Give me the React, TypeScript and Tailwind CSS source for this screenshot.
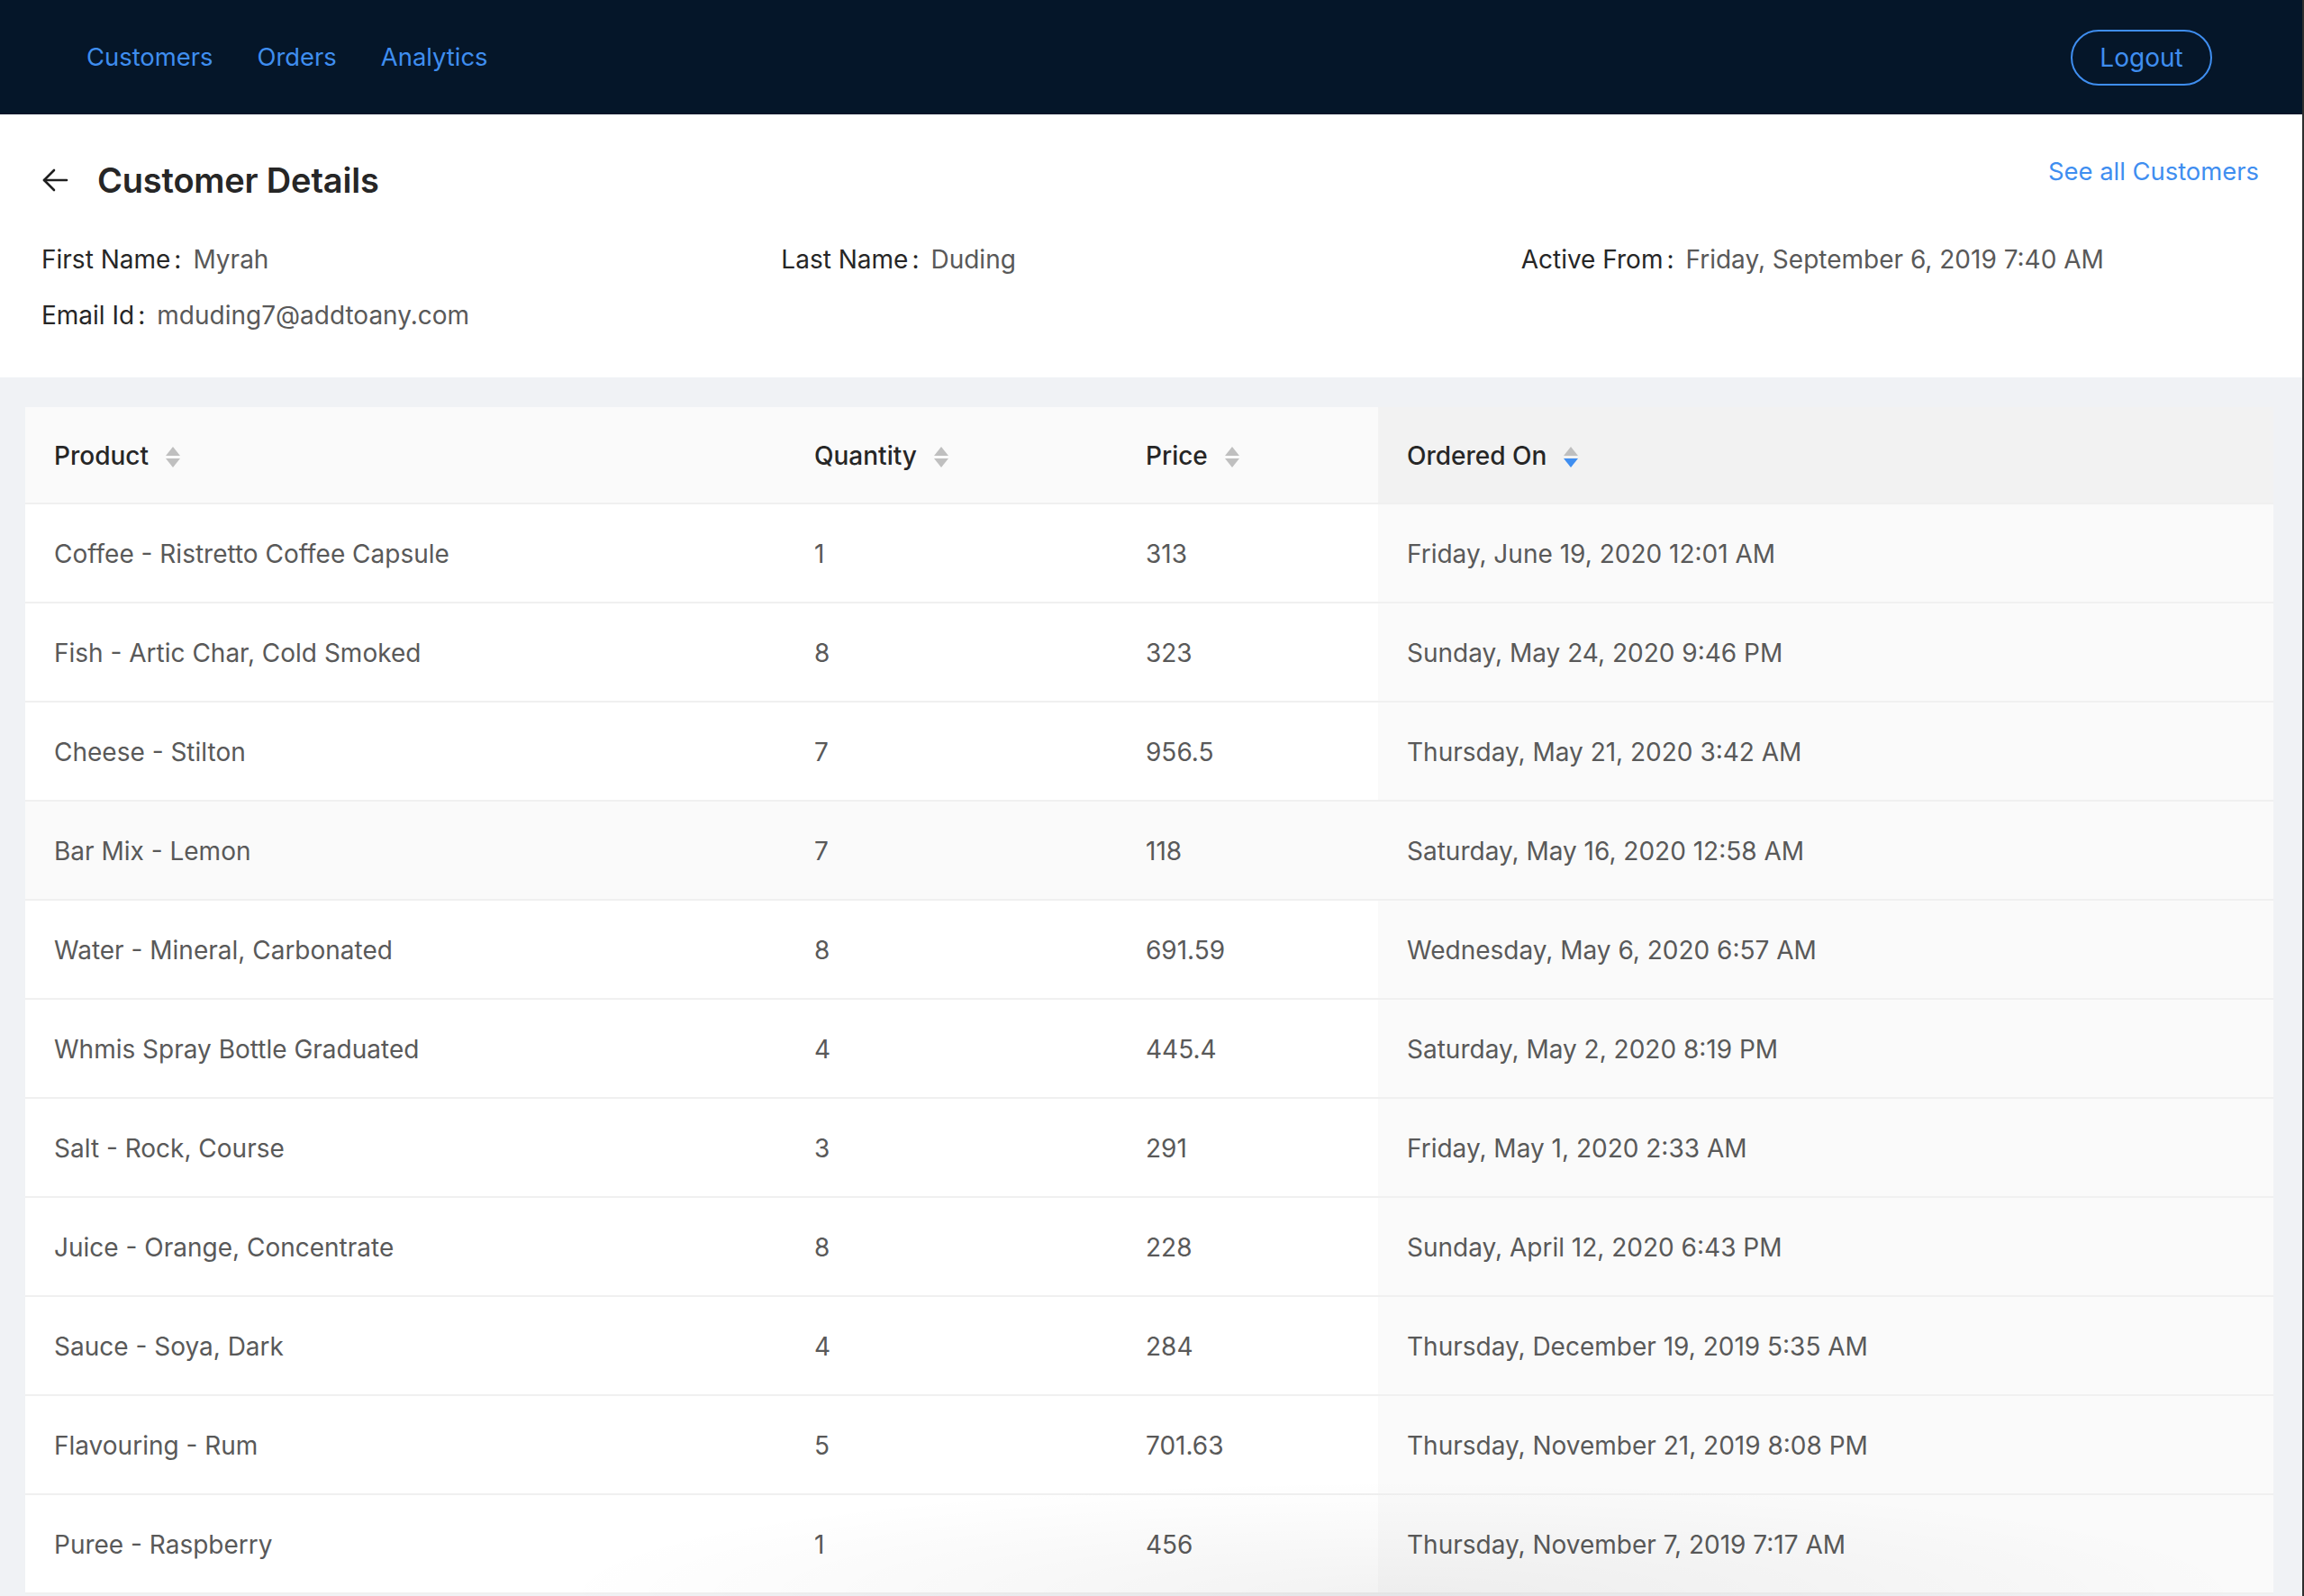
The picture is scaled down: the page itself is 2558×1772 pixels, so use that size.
import React from "react";

const rows = [
  ["Coffee - Ristretto Coffee Capsule", "1", "313", "Friday, June 19, 2020 12:01 AM"],
  ["Fish - Artic Char, Cold Smoked", "8", "323", "Sunday, May 24, 2020 9:46 PM"],
  ["Cheese - Stilton", "7", "956.5", "Thursday, May 21, 2020 3:42 AM"],
  ["Bar Mix - Lemon", "7", "118", "Saturday, May 16, 2020 12:58 AM"],
  ["Water - Mineral, Carbonated", "8", "691.59", "Wednesday, May 6, 2020 6:57 AM"],
  ["Whmis Spray Bottle Graduated", "4", "445.4", "Saturday, May 2, 2020 8:19 PM"],
  ["Salt - Rock, Course", "3", "291", "Friday, May 1, 2020 2:33 AM"],
  ["Juice - Orange, Concentrate", "8", "228", "Sunday, April 12, 2020 6:43 PM"],
  ["Sauce - Soya, Dark", "4", "284", "Thursday, December 19, 2019 5:35 AM"],
  ["Flavouring - Rum", "5", "701.63", "Thursday, November 21, 2019 8:08 PM"],
  ["Puree - Raspberry", "1", "456", "Thursday, November 7, 2019 7:17 AM"],
];

function SortIcon({ active }: { active?: boolean }) {
  return (
    <svg width="16" height="26" viewBox="0 0 16 26" className="ml-[19px] mt-[3px] shrink-0">
      <polygon points="8,1 16,11 0,11" fill="#bfbfbf" />
      <polygon points="0,14 16,14 8,24" fill={active ? "#3f8ef0" : "#bfbfbf"} />
    </svg>
  );
}

function Info({ label, value }: { label: string; value: string }) {
  return (
    <div className="flex items-center leading-[38px] text-[28px]">
      <span className="text-[#262626]">{label}</span>
      <span className="text-[#262626] ml-[4px] mr-[13px]">:</span>
      <span className="text-[#595959]">{value}</span>
    </div>
  );
}

export default function App() {
  return (
    <div
      className="w-full h-screen overflow-hidden flex bg-[#f0f2f5]"
      style={{ fontFamily: "Inter, 'Noto Sans', sans-serif" }}
    >
      <div className="flex-1 flex flex-col relative border-r-2 border-[#2e2e2e]">
        <header className="h-[127px] bg-[#051629] flex items-center justify-between pl-[96px] pr-[100px] shrink-0">
          <nav className="flex items-center gap-[49px] text-[27.4px] text-[#3f8ef0]">
            <span>Customers</span>
            <span>Orders</span>
            <span>Analytics</span>
          </nav>
          <button className="h-[62px] w-[157px] rounded-full border-2 border-[#3f8ef0] text-[#3f8ef0] text-[28px] flex items-center justify-center">
            Logout
          </button>
        </header>

        <section className="bg-white px-[46px] pt-[51px] pb-[50px] shrink-0">
          <div className="flex items-center justify-between h-[44px]">
            <div className="flex items-center gap-[32px]">
              <svg width="30" height="30" viewBox="0 0 30 30" fill="none" stroke="#1f1f1f" strokeWidth="2.6" strokeLinecap="round" strokeLinejoin="round">
                <line x1="3" y1="15" x2="28" y2="15" />
                <polyline points="14,4 3,15 14,26" />
              </svg>
              <h1 className="text-[38px] font-semibold text-[#262626] leading-[44px] tracking-[-0.2px]">Customer Details</h1>
            </div>
            <span className="text-[27.4px] text-[#3f8ef0] mb-[18px] mr-[2px]">See all Customers</span>
          </div>
          <div className="grid grid-cols-3 gap-y-[24px] mt-[47px]">
            <Info label="First Name" value="Myrah" />
            <Info label="Last Name" value="Duding" />
            <Info label="Active From" value="Friday, September 6, 2019 7:40 AM" />
            <Info label="Email Id" value="mduding7@addtoany.com" />
          </div>
        </section>

        <div className="flex-1 pl-[28px] pr-[32px] pt-[33px]">
          <div className="bg-white text-[28px]">
            <div className="grid grid-cols-[844px_368px_290px_1fr] h-[108px] border-b-2 border-[#f0f0f0] text-[#262626] font-medium">
              <div className="bg-[#fafafa] flex items-center pl-[32px] pt-[2px]">Product<SortIcon /></div>
              <div className="bg-[#fafafa] flex items-center pl-[32px] pt-[2px]">Quantity<SortIcon /></div>
              <div className="bg-[#fafafa] flex items-center pl-[32px] pt-[2px]">Price<SortIcon /></div>
              <div className="bg-[#f2f2f2] flex items-center pl-[32px] pt-[2px]">Ordered On<SortIcon active /></div>
            </div>
            {rows.map((r, i) => {
              const hover = i === 3;
              const base = hover ? "bg-[#fafafa]" : "bg-white";
              return (
                <div key={i} className="grid grid-cols-[844px_368px_290px_1fr] h-[110px] border-b-2 border-[#f0f0f0] text-[#595959]">
                  <div className={`${base} flex items-center pl-[32px] pt-[2px]`}>{r[0]}</div>
                  <div className={`${base} flex items-center pl-[32px] pt-[2px]`}>{r[1]}</div>
                  <div className={`${base} flex items-center pl-[32px] pt-[2px]`}>{r[2]}</div>
                  <div className="bg-[#fafafa] flex items-center pl-[32px] pt-[2px]">{r[3]}</div>
                </div>
              );
            })}
          </div>
        </div>
        <div className="absolute bottom-0 left-[600px] right-[40px] h-[130px] pointer-events-none bg-[radial-gradient(ellipse_at_bottom,rgba(0,0,0,0.05),transparent_70%)]" />
      </div>
    </div>
  );
}
